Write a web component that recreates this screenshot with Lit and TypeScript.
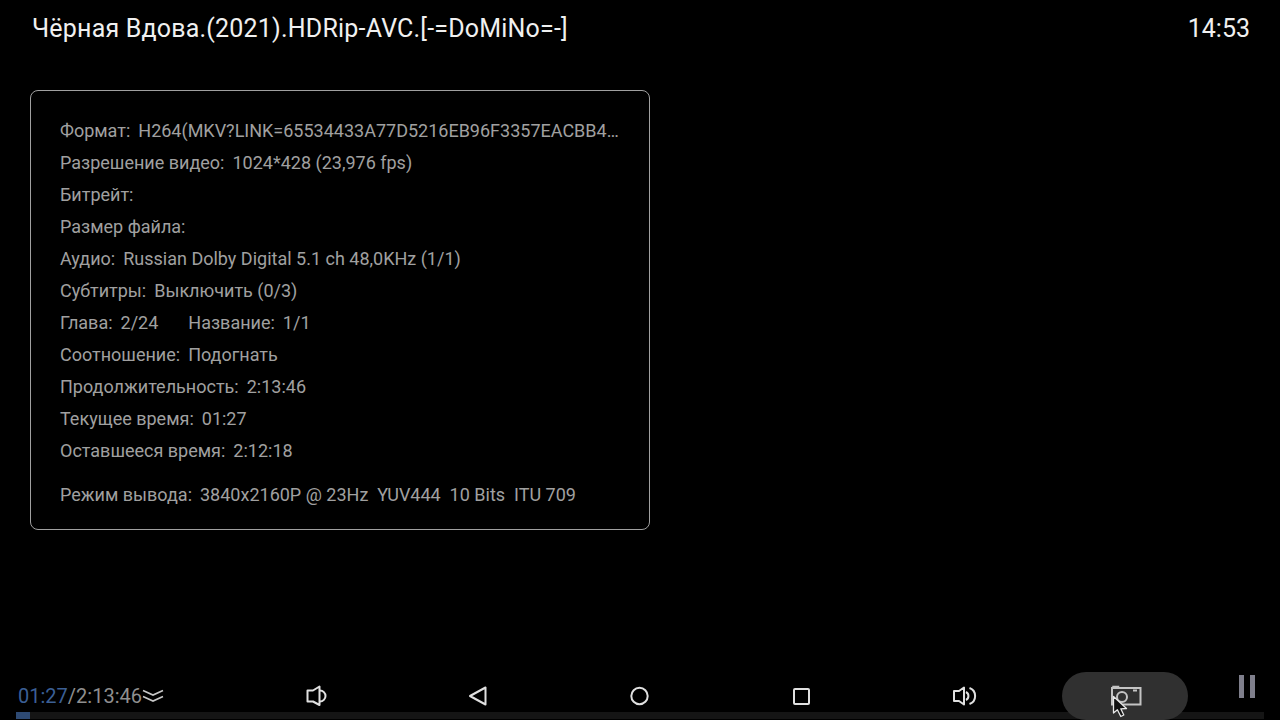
import { LitElement, html, css } from "lit";
import { customElement } from "lit/decorators.js";

const rows: [string, string][] = [
  ["Формат:", "H264(MKV?LINK=65534433A77D5216EB96F3357EACBB4…"],
  ["Разрешение видео:", "1024*428 (23,976 fps)"],
  ["Битрейт:", ""],
  ["Размер файла:", ""],
  ["Аудио:", "Russian Dolby Digital 5.1 ch 48,0KHz (1/1)"],
  ["Субтитры:", "Выключить (0/3)"],
  ["__chapter", ""],
  ["Соотношение:", "Подогнать"],
  ["Продолжительность:", "2:13:46"],
  ["Текущее время:", "01:27"],
  ["Оставшееся время:", "2:12:18"],
];

@customElement("app-root")
export class AppRoot extends LitElement {
  static styles = css`
    :host {
      display: flex;
      flex-direction: column;
      width: 1280px;
      height: 720px;
      background: #000;
      font-family: Roboto, "Liberation Sans", sans-serif;
      overflow: hidden;
      position: relative;
    }
    .top {
      display: flex;
      justify-content: space-between;
      padding: 15px 30px 0 32px;
      height: 90px;
      box-sizing: border-box;
      color: #f0f0f0;
      font-size: 25px;
      line-height: 28px;
      flex: none;
    }
    .title { letter-spacing: 0.2px; }
    .panel {
      margin-left: 30px;
      width: 620px;
      height: 440px;
      box-sizing: border-box;
      border: 1px solid #a0a0a0;
      border-radius: 8px;
      padding: 24px 29px 0;
      color: #a0a0a0;
      font-size: 18px;
      flex: none;
    }
    .row {
      height: 32px;
      line-height: 32px;
      white-space: nowrap;
      display: flex;
      gap: 8px;
    }
    .row.chapter { gap: 30px; }
    .pair { display: flex; gap: 8px; }
    .row.out { margin-top: 12px; }
    .spacer { flex: 1; }
    .bottom {
      height: 48px;
      position: relative;
      display: flex;
      align-items: center;
      padding-left: 18px;
      flex: none;
    }
    .time {
      width: 217px;
      flex: none;
      display: flex;
      align-items: center;
      font-size: 20px;
      color: #8f8f8f;
      margin-top: -1px;
    }
    .cur { color: #3b5f95; }
    .nav { display: flex; }
    .btn {
      width: 162px;
      height: 48px;
      display: flex;
      align-items: center;
      justify-content: center;
      position: relative;
    }
    .btn.on::before {
      content: "";
      position: absolute;
      left: 17px;
      top: 0;
      width: 126px;
      height: 48px;
      border-radius: 24px;
      background: #303030;
    }
    .btn svg { position: relative; }
    .track {
      position: absolute;
      left: 16px;
      top: 40px;
      width: 1248px;
      height: 7px;
      background: #151515;
    }
    .fill { width: 14px; height: 100%; background: #2e4a73; }
    .pause {
      position: absolute;
      left: 1239px;
      top: 3px;
      display: flex;
      gap: 6px;
    }
    .pause i { display: block; width: 5px; height: 23px; background: #7f7f8c; }
    .cursor { position: absolute; left: 1112px; top: 23px; }
  `;

  render() {
    return html`
      <div class="top">
        <span class="title">Чёрная Вдова.(2021).HDRip-AVC.[-=DoMiNo=-]</span>
        <span>14:53</span>
      </div>
      <div class="panel">
        ${rows.map(([k, v]) =>
          k === "__chapter"
            ? html`<div class="row chapter">
                <span class="pair"><span>Глава:</span><span>2/24</span></span>
                <span class="pair"><span>Название:</span><span>1/1</span></span>
              </div>`
            : html`<div class="row"><span>${k}</span><span>${v}</span></div>`
        )}
        <div class="row out">
          <span>Режим вывода:</span><span>3840x2160P @ 23Hz&nbsp; YUV444&nbsp; 10 Bits&nbsp; ITU 709</span>
        </div>
      </div>
      <div class="spacer"></div>
      <div class="bottom">
        <div class="track"><div class="fill"></div></div>
        <div class="time">
          <span class="cur">01:27</span><span>/2:13:46</span>
          <svg width="22" height="14" viewBox="0 0 22 14" fill="none" stroke="#c8c8c8" stroke-width="1.6">
            <path d="M1 1.5 L11 6 L21 1.5" /><path d="M1 7.5 L11 12 L21 7.5" />
          </svg>
        </div>
        <div class="nav">
          <div class="btn">
            <svg width="24" height="24" viewBox="0 0 24 24" fill="none" stroke="#e0e0e0" stroke-width="2" stroke-linejoin="round">
              <path d="M3.5 6.5 H9 L15.5 2.5 V21 L9 17.5 H3.5 Z" />
              <path d="M16 6.5 A5.5 5.5 0 0 1 16 17.5" />
            </svg>
          </div>
          <div class="btn">
            <svg width="24" height="24" viewBox="0 0 24 24" fill="none" stroke="#e0e0e0" stroke-width="2" stroke-linejoin="round">
              <path d="M19.5 3.5 V20.5 L4 12 Z" />
            </svg>
          </div>
          <div class="btn">
            <svg width="24" height="24" viewBox="0 0 24 24" fill="none" stroke="#e0e0e0" stroke-width="2">
              <circle cx="11.5" cy="12" r="8.2" />
            </svg>
          </div>
          <div class="btn">
            <svg width="24" height="24" viewBox="0 0 24 24" fill="none" stroke="#e0e0e0" stroke-width="2" stroke-linejoin="round">
              <rect x="4" y="5" width="15" height="15" rx="1" />
            </svg>
          </div>
          <div class="btn">
            <svg width="26" height="24" viewBox="0 0 26 24" fill="none" stroke="#e0e0e0" stroke-width="2" stroke-linejoin="round">
              <path d="M3 7 H8 L13 3.5 V20.5 L8 17 H3 Z" />
              <path d="M15 8 A4.5 4.5 0 0 1 15 16" />
              <path d="M18.5 4 A8.5 8.5 0 0 1 18.5 20" />
            </svg>
          </div>
          <div class="btn on">
            <svg width="32" height="26" viewBox="0 0 32 26" fill="none" stroke="#c4c4c4" stroke-width="2">
              <path d="M2 5 H30.5 V21.5 H2 Z" />
              <path d="M3 5 V3.5 H8.5 V5" stroke-width="1.5" />
              <circle cx="12" cy="14" r="5" />
              <path d="M23 7.5 H27" />
            </svg>
          </div>
        </div>
        <div class="pause"><i></i><i></i></div>
        <svg class="cursor" width="17" height="24" viewBox="0 0 17 24">
          <path d="M1.5 1.5 V18 L5.4 14.8 L8.8 21.5 L11.8 20 L8.8 13.8 L14.5 13.5 Z" fill="#111" stroke="#e8e8e8" stroke-width="1.3" stroke-linejoin="round" />
        </svg>
      </div>
    `;
  }
}
